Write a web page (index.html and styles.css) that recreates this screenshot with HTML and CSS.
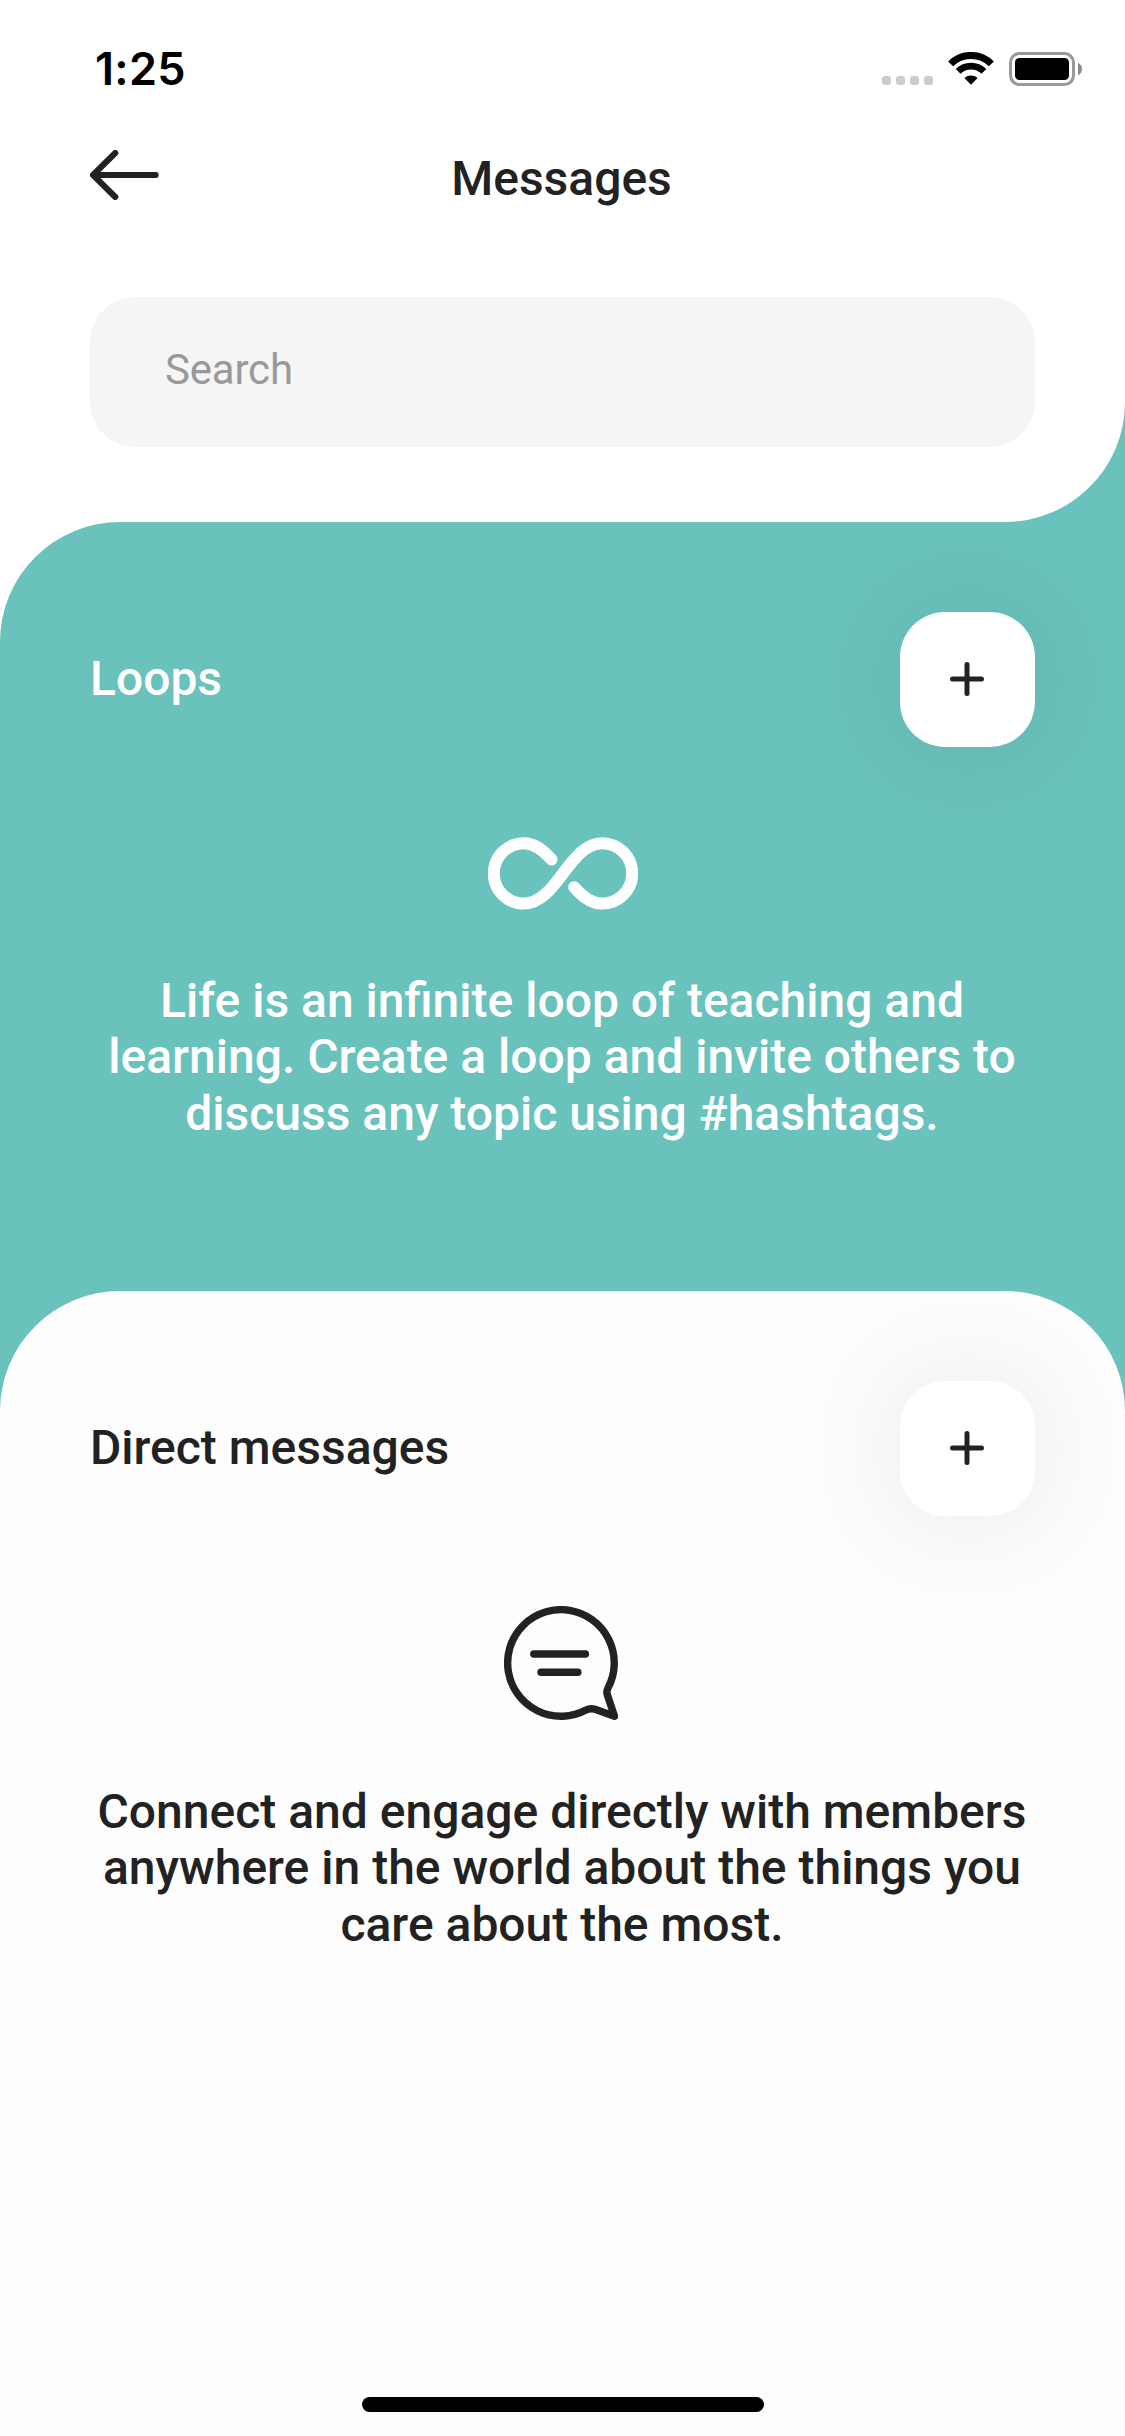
FILE: index.html
```html
<!DOCTYPE html>
<html lang="en">
<head>
<meta charset="utf-8">
<title>Messages</title>
<link rel="stylesheet" href="styles.css">
</head>
<body>
<div class="screen">
  <div class="top-backdrop">
    <header class="top">
      <div class="status-bar">
        <span class="time">1:25</span>
        <div class="status-icons">
          <div class="cell-dots"><i></i><i></i><i></i><i></i></div>
          <svg class="wifi" width="46" height="34" viewBox="0 0 46 34">
            <g fill="none" stroke="#000">
              <path stroke-width="7" d="M2.6 11.9a28.8 28.8 0 0 1 40.8 0"/>
              <path stroke-width="6.7" d="M10.1 19.4a18.2 18.2 0 0 1 25.8 0"/>
            </g>
            <path d="M23 32.8l-6.6-6.9a10 10 0 0 1 13.2 0z"/>
          </svg>
          <svg class="battery" width="73" height="34" viewBox="0 0 73 34">
            <rect x="1.5" y="1.5" width="63" height="31" rx="9" fill="none" stroke="#999" stroke-width="3"/>
            <rect x="6" y="6" width="54" height="22" rx="4.5"/>
            <path d="M69 10.7q4 2 4 6.3t-4 6.3z" fill="#8c8c8c"/>
          </svg>
        </div>
      </div>
      <nav class="nav-bar">
        <svg class="back" width="69" height="50" viewBox="0 0 69 50" fill="none" stroke="#222" stroke-width="6" stroke-linecap="round" stroke-linejoin="round">
          <path d="M25.3 3L3 25l22.3 22M3 25h62.7"/>
        </svg>
        <h1 class="title">Messages</h1>
      </nav>
      <div class="search">Search</div>
    </header>
  </div>
  <div class="loops-backdrop">
    <section class="panel loops">
      <div class="panel-head">
        <h2>Loops</h2>
        <button class="add" aria-label="Create a loop">
          <svg width="34" height="34" viewBox="0 0 34 34" stroke="#222" stroke-width="5" stroke-linecap="round"><path d="M2.5 17h29M17 2.5v29"/></svg>
        </button>
      </div>
      <svg class="panel-icon" width="150" height="73" viewBox="0 0 150 73" fill="none" stroke="#fff" stroke-width="12" stroke-linecap="round">
        <path d="M63.6 22.5C55.5 13.5 47 6.2 36 6.2a30.2 30.2 0 0 0 0 60.4C53 66.6 65 49.5 75 36.4S97 6.2 114 6.2a30.2 30.2 0 0 1 0 60.4C103 66.6 94 59.5 86.2 50.2"/>
      </svg>
      <p>Life is an infinite loop of teaching and<br>learning. Create a loop and invite others to<br>discuss any topic using #hashtags.</p>
    </section>
  </div>
  <div class="direct-backdrop">
    <section class="panel direct">
      <div class="panel-head">
        <h2>Direct messages</h2>
        <button class="add" aria-label="New direct message">
          <svg width="34" height="34" viewBox="0 0 34 34" stroke="#222" stroke-width="5" stroke-linecap="round"><path d="M2.5 17h29M17 2.5v29"/></svg>
        </button>
      </div>
      <svg class="panel-icon chat" width="114" height="114" viewBox="0 0 114 114" fill="none" stroke="#222" stroke-width="7.4" stroke-linecap="round" stroke-linejoin="round">
        <path d="M104 82q-1.7 3.5-.8 6.5l7.3 21.8L91 103.3q-4.5-1.5-9 .7A53.3 53.3 0 1 1 104 82z"/>
        <path d="M29.8 48h51.6M37 66.3h36.9"/>
      </svg>
      <p>Connect and engage directly with members<br>anywhere in the world about the things you<br>care about the most.</p>
      <div class="home-indicator"></div>
    </section>
  </div>
</div>
</body>
</html>
```
FILE: styles.css
```css
* { box-sizing: border-box; }

body {
  margin: 0;
  font-family: Roboto, "Liberation Sans", sans-serif;
  color: #222;
}

.screen {
  display: flex;
  flex-direction: column;
  width: 1125px;
  height: 2436px;
  overflow: hidden;
}

.top-backdrop {
  background: #6ac2bc;
  position: relative;
  z-index: 1;
}

.top {
  height: 522px;
  padding: 0 90px;
  background: #fff;
  border-bottom-right-radius: 120px;
}

.status-bar {
  display: flex;
  justify-content: space-between;
  height: 132px;
  margin-right: -47px;
  padding: 41px 0 0 5px;
}

.time {
  font: 600 45px/55px Inter, sans-serif;
  letter-spacing: 0.3px;
  color: #000;
}

.status-icons {
  display: flex;
  align-items: flex-end;
  height: 45px;
}

.cell-dots {
  display: flex;
  gap: 5px;
  margin-right: 15px;
  padding-bottom: 1px;
}

.cell-dots i {
  width: 9px;
  height: 9px;
  border-radius: 3px;
  background: #ccc;
}

.battery { margin-left: 15px; }

.nav-bar {
  display: grid;
  grid-template-columns: 1fr auto 1fr;
  height: 165px;
  padding-top: 18px;
}

.title {
  margin: 1px 2px 0 0;
  font-size: 48px;
  font-weight: 500;
  line-height: 56px;
}

.search {
  height: 150px;
  padding: 48px 75px;
  border-radius: 45px;
  background: #f5f5f5;
  color: #999;
  font-size: 42px;
  line-height: 50px;
  letter-spacing: -0.2px;
}

.loops-backdrop { background: #fff; }

.loops {
  height: 769px;
  background: #6ac2bc;
  border-top-left-radius: 120px;
  color: #fff;
}

.direct-backdrop {
  flex: 1;
  display: flex;
  background: #6ac2bc;
  position: relative;
}

.direct {
  flex: 1;
  background: #fdfdfd;
  border-radius: 120px 120px 0 0;
  overflow: hidden;
}

.panel {
  display: flex;
  flex-direction: column;
  align-items: center;
  padding: 90px 90px 0;
}

.panel-head {
  display: flex;
  align-items: center;
  justify-content: space-between;
  align-self: stretch;
}

.panel h2 {
  margin: 0 0 2px;
  font-size: 48px;
  font-weight: 500;
  line-height: 56px;
}

.add {
  display: flex;
  align-items: center;
  justify-content: center;
  width: 135px;
  height: 135px;
  padding: 0 2px 1px 0;
  border: 0;
  border-radius: 45px;
  background: #fff;
  box-shadow: 0 0 108px rgba(0, 0, 0, 0.09);
}

.panel-icon {
  flex: none;
  margin-top: 90px;
}

.chat { margin-right: 3px; }

.panel p {
  margin: 62.7px 1px 0 0;
  font-size: 48px;
  font-weight: 500;
  line-height: 56.6px;
  text-align: center;
  white-space: nowrap;
}

.panel .chat + p { margin-top: 63.7px; }

.home-indicator {
  width: 402px;
  height: 15px;
  margin: auto 0 24px;
  border-radius: 7.5px;
  background: #000;
}
```
